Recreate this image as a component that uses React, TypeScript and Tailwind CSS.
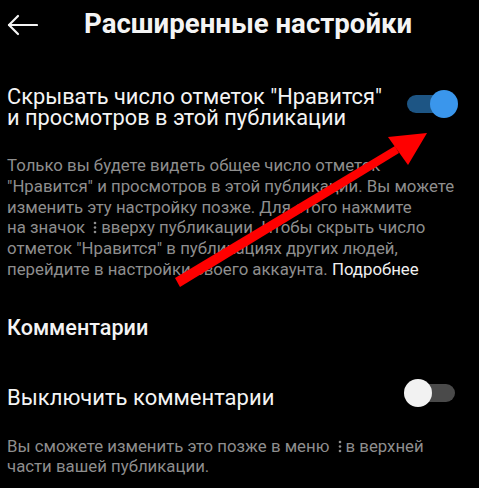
import React from 'react';

const Dots = () => (
  <svg width="8" height="16" viewBox="0 0 8 16" className="inline-block align-[-2px] mx-[2px]" fill="currentColor">
    <circle cx="4" cy="4" r="1.3" />
    <circle cx="4" cy="8.5" r="1.3" />
    <circle cx="4" cy="13" r="1.3" />
  </svg>
);

const Toggle = ({ on }: { on: boolean }) => (
  <div className="relative w-[51px] h-[28px] shrink-0">
    <div
      className={`absolute top-[5px] w-[46px] h-[18px] rounded-full ${on ? 'left-0 bg-[#1d5584]' : 'right-0 bg-[#4a4a4a]'}`}
    ></div>
    <div
      className={`absolute top-0 w-[28px] h-[28px] rounded-full ${on ? 'right-0 bg-[#3a96ec]' : 'left-0 bg-[#f2f2f2]'}`}
    ></div>
  </div>
);

export default function App() {
  return (
    <div
      className="relative w-[479px] h-[488px] bg-black text-[#f4f4f4] overflow-hidden"
      style={{ fontFamily: 'Roboto, "Noto Sans", sans-serif' }}
    >
      {/* Header */}
      <div className="flex items-center h-[48px] pl-[7px]">
        <svg className="mt-[2px]" width="31" height="22" viewBox="0 0 31 22" fill="none" stroke="#f4f4f4" strokeWidth="2.2" strokeLinecap="round" strokeLinejoin="round">
          <path d="M30 11H2" />
          <path d="M11 2L2 11l9 9" />
        </svg>
        <h1 className="ml-[46px] text-[27.6px] font-bold">Расширенные настройки</h1>
      </div>

      {/* Hide likes */}
      <div className="flex items-start justify-between pl-[7px] pr-[21px] mt-[38px]">
        <div className="text-[21.8px] leading-[21px]">
          Скрывать число отметок "Нравится"
          <br />и просмотров в этой публикации
        </div>
        <div className="mt-[4px]">
          <Toggle on />
        </div>
      </div>

      <p className="px-[7px] mt-[27px] text-[16.8px] leading-[20.8px] text-[#8e8e8e] whitespace-nowrap">
        Только вы будете видеть общее число отметок
        <br />"Нравится" и просмотров в этой публикации. Вы можете
        <br />изменить эту настройку позже. Для этого нажмите
        <br />на значок <Dots />вверху публикации. Чтобы скрыть число
        <br />отметок "Нравится" в публикациях других людей,
        <br />перейдите в настройки своего аккаунта. <span className="text-[#f0f0f0]">Подробнее</span>
      </p>

      {/* Comments */}
      <h2 className="px-[7px] mt-[36px] text-[21.6px] leading-[24px] font-medium">Комментарии</h2>

      <div className="flex items-start justify-between pl-[7px] pr-[24px] mt-[45px]">
        <div className="text-[22px] leading-[26px]">Выключить комментарии</div>
        <div className="-mt-[6px]">
          <Toggle on={false} />
        </div>
      </div>

      <p className="px-[7px] mt-[25px] text-[16.8px] leading-[20px] text-[#8e8e8e] whitespace-nowrap">
        Вы сможете изменить это позже в меню <Dots />в верхней
        <br />части вашей публикации.
      </p>

      {/* Red annotation arrow */}
      <svg className="absolute left-0 top-0 pointer-events-none" width="479" height="488" viewBox="0 0 479 488">
        <path d="M175 278L395 146L399 153L180 287Z" fill="#ff0000" />
        <path d="M427 133L388 137L408 165Z" fill="#ff0000" />
      </svg>
    </div>
  );
}
